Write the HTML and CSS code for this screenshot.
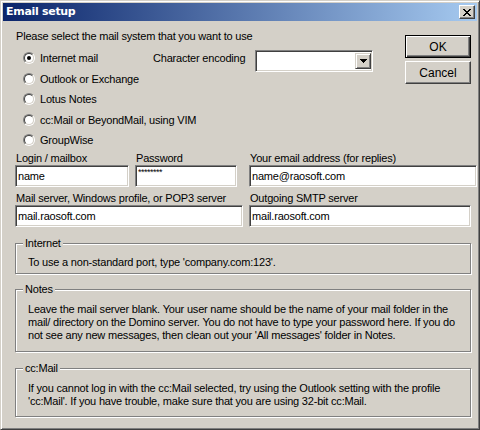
FILE: index.html
```html
<!DOCTYPE html>
<html>
<head>
<meta charset="utf-8">
<link rel="stylesheet" href="styles.css">
</head>
<body>
<div class="window">
  <div class="titlebar">
    <span class="title">Email setup</span>
    <span class="close"><svg width="8" height="7" viewBox="0 0 8 7" shape-rendering="crispEdges"><path d="M0 0h2v1H0zM6 0h2v1H6zM1 1h2v1H1zM5 1h2v1H5zM2 2h4v1H2zM3 3h2v1H3zM2 4h4v1H2zM1 5h2v1H1zM5 5h2v1H5zM0 6h2v1H0zM6 6h2v1H6z" fill="#000"/></svg></span>
  </div>
  <div class="body">
    <div class="top">
      <div class="left">
        <div class="prompt">Please select the mail system that you want to use</div>
        <div class="radios">
          <div class="row">
            <div class="opt"><span class="radio checked"></span><span>Internet mail</span></div>
            <span class="enc-label">Character encoding</span>
            <div class="combo"><div class="combo-btn"><svg width="7" height="4" viewBox="0 0 7 4" shape-rendering="crispEdges"><path d="M0 0h7v1H0zM1 1h5v1H1zM2 2h3v1H2zM3 3h1v1H3z" fill="#000"/></svg></div></div>
          </div>
          <div class="row"><div class="opt"><span class="radio"></span><span>Outlook or Exchange</span></div></div>
          <div class="row"><div class="opt"><span class="radio"></span><span>Lotus Notes</span></div></div>
          <div class="row"><div class="opt wide"><span class="radio"></span><span>cc:Mail or BeyondMail, using VIM</span></div></div>
          <div class="row"><div class="opt"><span class="radio"></span><span>GroupWise</span></div></div>
        </div>
      </div>
      <div class="buttons">
        <div class="btn default">OK</div>
        <div class="btn">Cancel</div>
      </div>
    </div>
    <div class="frow">
      <div class="field w-login"><span class="lbl">Login / mailbox</span><div class="input">name</div></div>
      <div class="field w-pass"><span class="lbl">Password</span><div class="input pass">********</div></div>
      <div class="field w-email"><span class="lbl">Your email address (for replies)</span><div class="input">name@raosoft.com</div></div>
    </div>
    <div class="frow second">
      <div class="field w-server"><span class="lbl">Mail server, Windows profile, or POP3 server</span><div class="input">mail.raosoft.com</div></div>
      <div class="field w-smtp"><span class="lbl">Outgoing SMTP server</span><div class="input">mail.raosoft.com</div></div>
    </div>
    <fieldset class="group g-internet">
      <legend>Internet</legend>
      <p>To use a non-standard port, type 'company.com:123'.</p>
    </fieldset>
    <fieldset class="group g-notes">
      <legend>Notes</legend>
      <p>Leave the mail server blank. Your user name should be the name of your mail folder in the<br>mail/ directory on the Domino server. You do not have to type your password here. If you do<br>not see any new messages, then clean out your 'All messages' folder in Notes.</p>
    </fieldset>
    <fieldset class="group g-cc">
      <legend>cc:Mail</legend>
      <p>If you cannot log in with the cc:Mail selected, try using the Outlook setting with the profile<br>'cc:Mail'. If you have trouble, make sure that you are using 32-bit cc:Mail.</p>
    </fieldset>
  </div>
</div>
</body>
</html>
```
FILE: styles.css
```css
* { box-sizing: border-box; }
html, body { margin: 0; padding: 0; }
body {
  width: 480px;
  height: 430px;
  background: #D4D0C8;
  font-family: "Liberation Sans", Arial, sans-serif;
  font-size: 11px;
  letter-spacing: -0.2px;
  color: #000;
}
.window {
  width: 480px;
  height: 430px;
  background: #D4D0C8;
  border: 1px solid;
  border-color: #D4D0C8 #404040 #404040 #D4D0C8;
  box-shadow: inset 1px 1px #fff, inset -1px -1px #808080;
  padding: 2px;
  display: flex;
  flex-direction: column;
}
.titlebar {
  height: 18px;
  flex: none;
  background: linear-gradient(to right, #0A246A, #A6CAF0);
  display: flex;
  align-items: center;
  justify-content: space-between;
  padding: 0 2px 0 3px;
}
.title {
  color: #fff;
  font-family: "DejaVu Sans", "Liberation Sans", sans-serif;
  font-weight: bold;
  font-size: 11px;
  letter-spacing: -0.3px;
  line-height: 14px;
}
.close {
  width: 16px;
  height: 14px;
  background: #D4D0C8;
  border: 1px solid;
  border-color: #fff #404040 #404040 #fff;
  box-shadow: inset -1px -1px #808080;
  display: flex;
  align-items: center;
  justify-content: center;
  padding-right: 1px;
}
.close svg { display: block; }
.body {
  flex: 1;
  padding: 0 0 0 12px;
}
.top {
  display: flex;
  justify-content: space-between;
}
.left { padding-top: 9px; }
.prompt { line-height: 13px; padding-left: 1px; }
.radios { margin-top: 5px; }
.row {
  height: 20.5px;
  display: flex;
  align-items: center;
}
.opt {
  display: flex;
  align-items: center;
  padding-left: 8px;
  width: 138px;
  white-space: nowrap;
}
.opt.wide { width: auto; }
.radio {
  flex: none;
  width: 12px;
  height: 12px;
  margin-right: 5px;
  border-radius: 50%;
  border: 1px solid;
  border-color: #808080 #fff #fff #808080;
  position: relative;
}
.radio::before {
  content: "";
  position: absolute;
  inset: 0;
  border-radius: 50%;
  border: 1px solid;
  border-color: #404040 #D4D0C8 #D4D0C8 #404040;
  background: #fff;
}
.radio.checked::after {
  content: "";
  position: absolute;
  left: 3px;
  top: 3px;
  width: 4px;
  height: 4px;
  border-radius: 50%;
  background: #000;
}
.enc-label { width: 102px; white-space: nowrap; }
.combo {
  width: 118px;
  height: 22px;
  align-self: flex-start;
  margin-top: 2px;
  background: #fff;
  border: 1px solid;
  border-color: #808080 #fff #fff #808080;
  box-shadow: inset 1px 1px #404040, inset -1px -1px #D4D0C8;
  padding: 2px 1px 2px 2px;
  display: flex;
  justify-content: flex-end;
}
.combo-btn {
  width: 16px;
  height: 100%;
  background: #D4D0C8;
  border: 1px solid;
  border-color: #D4D0C8 #404040 #404040 #D4D0C8;
  box-shadow: inset 1px 1px #fff, inset -1px -1px #808080;
  display: flex;
  align-items: center;
  justify-content: center;
}
.combo-btn svg { display: block; }
.buttons {
  margin-top: 14px;
  margin-right: 6px;
  display: flex;
  flex-direction: column;
  gap: 3px;
}
.btn {
  width: 66px;
  height: 23px;
  display: flex;
  align-items: center;
  justify-content: center;
  border: 1px solid;
  border-color: #fff #404040 #404040 #fff;
  box-shadow: inset -1px -1px #808080;
  font-size: 12px;
  letter-spacing: 0;
}
.btn.default {
  border: 1px solid #000;
  box-shadow: inset 1px 1px #fff, inset -1px -1px #404040, inset -2px -2px #808080;
}
.frow { display: flex; }
.frow.second { margin-top: 4px; }
.field { display: flex; flex-direction: column; }
.lbl { line-height: 14px; padding-left: 1px; white-space: nowrap; }
.input {
  height: 22px;
  background: #fff;
  border: 1px solid;
  border-color: #808080 #fff #fff #808080;
  box-shadow: inset 1px 1px #404040, inset -1px -1px #D4D0C8;
  padding-left: 2px;
  line-height: 20px;
  white-space: nowrap;
  overflow: hidden;
}
.input.pass { font-size: 9px; line-height: 12px; letter-spacing: -0.5px; }
.w-login { width: 114px; margin-right: 6px; }
.w-pass { width: 102px; margin-right: 12px; }
.w-email { width: 228px; }
.w-server { width: 228px; margin-right: 6px; }
.w-smtp { width: 222px; }
.group {
  margin: 0 6px 0 0;
  padding: 0 6px 0 9px;
  border: 1px solid #808080;
  box-shadow: inset 1px 1px #fff, 1px 1px #fff;
  min-width: 0;
}
.group legend {
  padding: 0 2px;
  margin-left: -2px;
  line-height: 13px;
  background: #D4D0C8;
}
.group p {
  margin: 0;
  padding-left: 3px;
  line-height: 13px;
  white-space: nowrap;
}
.g-internet { margin-top: 10px; padding-top: 6.5px; padding-bottom: 4px; }
.g-notes { margin-top: 8.5px; padding-top: 7px; padding-bottom: 9.5px; }
.g-cc { margin-top: 9.5px; padding-top: 7px; padding-bottom: 8.5px; }
```
